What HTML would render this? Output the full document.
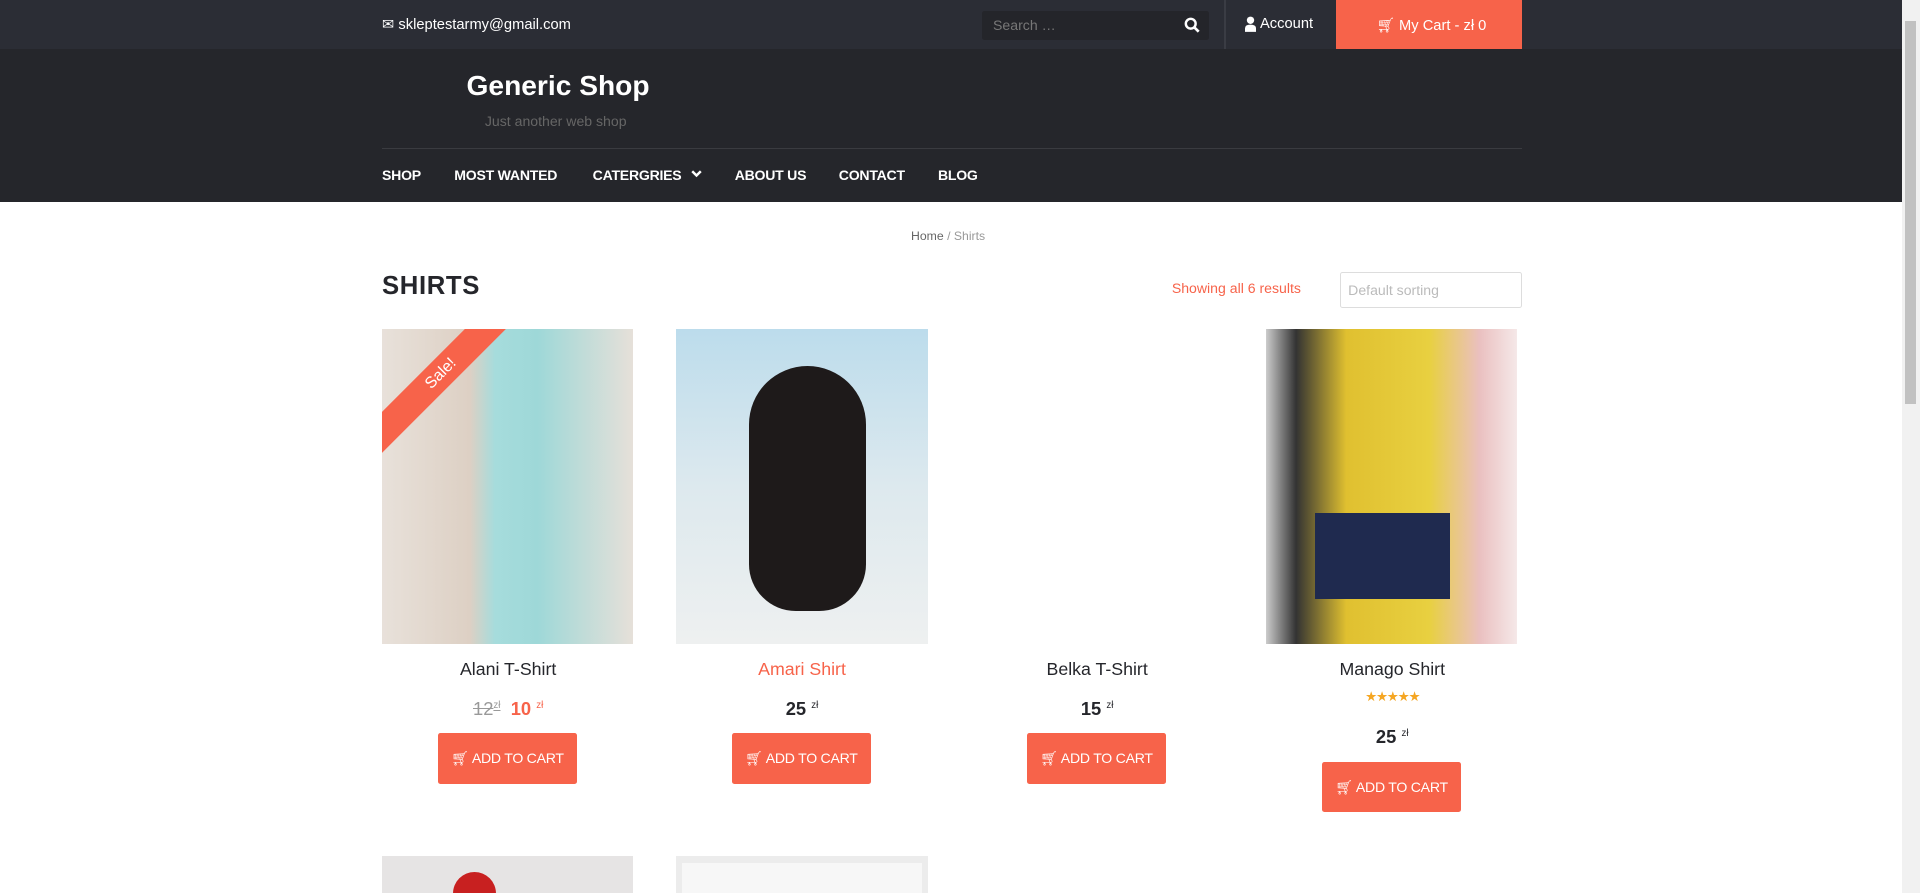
<!DOCTYPE html>
<html><head><meta charset="utf-8"><style>
html,body{margin:0;padding:0;overflow:hidden}
body{width:1568px;height:729px;zoom:1.22449;font-family:"Liberation Sans",sans-serif;background:#fff;position:relative}
.a{position:absolute}
.top{left:0;top:0;width:1553px;height:40px;background:#2b2d35}
.hdr{left:0;top:40px;width:1553px;height:125px;background:#25262b}
.w{color:#fff}
.nav{top:136px;font-size:11.5px;font-weight:bold;color:#fff;letter-spacing:-0.2px}
.t{text-align:center;width:206px}
.name{font-size:14.5px;color:#25262b;top:538px}
.price{font-size:15px;font-weight:bold;color:#25262b;top:570px}
.price sup{font-size:8px;font-weight:normal}
.btn{background:#f7634a;color:#fff;font-size:11.5px;width:113px;height:41px;border-radius:2px;line-height:41px;text-align:center;letter-spacing:-0.2px}
</style></head><body>
<div class="a top"></div>
<div class="a hdr"></div>
<div class="a w" style="left:312px;top:13px;font-size:12px">&#9993; skleptestarmy@gmail.com</div>
<div class="a" style="left:802px;top:9px;width:185px;height:24px;background:#24252a;border-radius:2px"></div>
<div class="a" style="left:811px;top:14px;font-size:11.5px;color:#777">Search …</div>
<svg class="a" style="left:967px;top:14px" width="13" height="13" viewBox="0 0 13 13"><circle cx="5.5" cy="5.5" r="4" stroke="#fff" stroke-width="2" fill="none"/><path d="M8.5 8.5L12 12" stroke="#fff" stroke-width="2.2"/></svg>
<div class="a" style="left:1000px;top:0;width:1px;height:40px;background:#3a3c44"></div>
<svg class="a" style="left:1017px;top:13px" width="9" height="13" viewBox="0 0 9 13"><circle cx="4.5" cy="3.5" r="3" fill="#fff"/><path d="M0 13V10Q0 7 4.5 7Q9 7 9 10V13Z" fill="#fff"/></svg>
<div class="a w" style="left:1029px;top:13px;font-size:12px">Account</div>
<div class="a" style="left:1091px;top:0;width:152px;height:40px;background:#f7634a"></div>
<div class="a w" style="left:1124px;top:13px;font-size:12px">&#128722;&#xFE0E; My Cart - zł 0</div>
<div class="a w" style="left:381px;top:57px;font-size:23px;font-weight:bold">Generic Shop</div>
<div class="a" style="left:396px;top:92px;font-size:11.5px;color:#666">Just another web shop</div>
<div class="a" style="left:312px;top:121px;width:931px;height:1px;background:#3a3b40"></div>
<div class="a nav" style="left:312px">SHOP</div>
<div class="a nav" style="left:371px">MOST WANTED</div>
<div class="a nav" style="left:484px">CATERGRIES</div>
<svg class="a" style="left:564px;top:139px" width="9" height="6" viewBox="0 0 9 6"><path d="M1 1L4.5 4.5L8 1" stroke="#fff" stroke-width="2" fill="none"/></svg>
<div class="a nav" style="left:600px">ABOUT US</div>
<div class="a nav" style="left:685px">CONTACT</div>
<div class="a nav" style="left:766px">BLOG</div>
<div class="a" style="left:1553px;top:0;width:15px;height:729px;background:#f1f1f1"></div>
<div class="a" style="left:1556px;top:17px;width:9px;height:313px;background:#c1c1c1"></div>
<div class="a" style="left:744px;top:187px;font-size:10px;color:#666">Home <span style="color:#999">/ Shirts</span></div>
<div class="a" style="left:312px;top:222px;font-size:21px;font-weight:bold;color:#25262b;letter-spacing:0.5px">SHIRTS</div>
<div class="a" style="left:957px;top:229px;font-size:11.5px;color:#f7634a">Showing all 6 results</div>
<div class="a" style="left:1094px;top:222px;width:147px;height:28px;border:1px solid #ddd;border-radius:2px"></div>
<div class="a" style="left:1101px;top:230px;font-size:11.5px;color:#bbb">Default sorting</div>
<div class="a" style="left:312px;top:269px;width:205px;height:257px;background:linear-gradient(90deg,#e8e1da,#ddd0c4 35%,#a6dcdc 45%,#9ed8d8 62%,#e6e0d9);overflow:hidden">
<div class="a" style="left:-32px;top:24px;width:160px;height:24px;background:#f7634a;transform:rotate(-45deg);color:#fff;font-size:13px;text-align:center;line-height:24px">Sale!</div></div>
<div class="a" style="left:552px;top:269px;width:206px;height:257px;background:linear-gradient(180deg,#bcdcec,#dde9ee 50%,#eef0f0);overflow:hidden"><div class="a" style="left:60px;top:30px;width:95px;height:200px;background:#1e1a1a;border-radius:50px 50px 40px 40px"></div></div>
<div class="a" style="left:1034px;top:269px;width:205px;height:257px;background:linear-gradient(90deg,#ccc 0,#333 12%,#e0c030 32%,#e8d040 65%,#eac0c0 85%,#f5e8e8);overflow:hidden"><div class="a" style="left:40px;top:150px;width:110px;height:70px;background:#1f2a4f"></div></div>
<div class="a" style="left:312px;top:699px;width:205px;height:30px;background:#e6e4e4"><div class="a" style="left:58px;top:13px;width:35px;height:20px;background:#c82020;border-radius:18px 18px 0 0"></div></div>
<div class="a" style="left:552px;top:699px;width:206px;height:30px;background:#ececec"><div class="a" style="left:5px;top:6px;width:196px;height:30px;background:#f7f7f7"></div></div>
<div class="a t name" style="left:312px">Alani T-Shirt</div>
<div class="a t name" style="left:552px;color:#f7634a">Amari Shirt</div>
<div class="a t name" style="left:793px">Belka T-Shirt</div>
<div class="a t name" style="left:1034px">Manago Shirt</div>
<div class="a t price" style="left:312px"><s style="color:#999;font-weight:normal">12<sup>zł</sup></s> &nbsp;<span style="color:#f7634a">10 <sup>zł</sup></span></div>
<div class="a t price" style="left:552px">25 <sup>zł</sup></div>
<div class="a t price" style="left:793px">15 <sup>zł</sup></div>
<div class="a t" style="left:1034px;top:563px;font-size:11px;color:#f5a623;letter-spacing:-1px">★★★★★</div>
<div class="a t price" style="left:1034px;top:593px">25 <sup>zł</sup></div>
<div class="a btn" style="left:358px;top:599px">&#128722;&#xFE0E; ADD TO CART</div>
<div class="a btn" style="left:598px;top:599px">&#128722;&#xFE0E; ADD TO CART</div>
<div class="a btn" style="left:839px;top:599px">&#128722;&#xFE0E; ADD TO CART</div>
<div class="a btn" style="left:1080px;top:622px">&#128722;&#xFE0E; ADD TO CART</div>
</body></html>
